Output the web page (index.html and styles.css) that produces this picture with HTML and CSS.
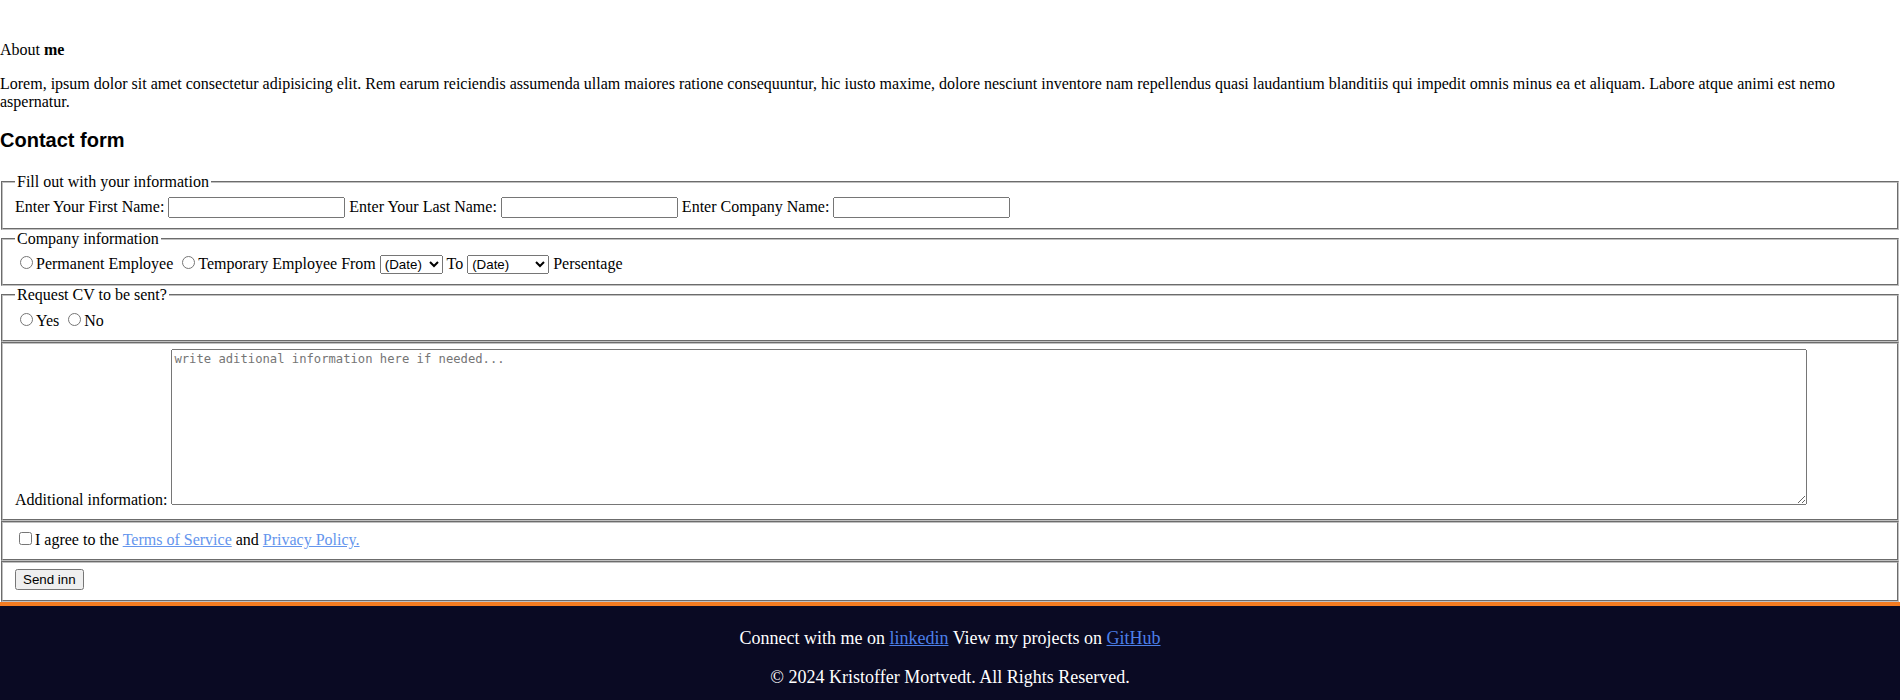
FILE: index.html
```html
<!DOCTYPE html>
<html lang="en">
<head>
<meta charset="utf-8">
<title>About me</title>
<link rel="stylesheet" href="styles.css">
</head>
<body>
<main class="page">
  <section class="about">
    <p class="about-title">About <b>me</b></p>
    <p class="about-text">Lorem, ipsum dolor sit amet consectetur adipisicing elit. Rem earum reiciendis assumenda ullam maiores ratione consequuntur, hic iusto maxime, dolore nesciunt inventore nam repellendus quasi laudantium blanditiis qui impedit omnis minus ea et aliquam. Labore atque animi est nemo aspernatur.</p>
  </section>
  <h3 class="form-title">Contact form</h3>
  <form class="contact">
    <fieldset class="group">
      <legend>Fill out with your information</legend>
      <label>Enter Your First Name: <input class="field" type="text"></label>
      <label>Enter Your Last Name: <input class="field" type="text"></label>
      <label>Enter Company Name: <input class="field" type="text"></label>
    </fieldset>
    <fieldset class="group">
      <legend>Company information</legend>
      <label><input type="radio" name="emp">Permanent Employee</label>
      <label><input type="radio" name="emp">Temporary Employee</label>
      <label>From <select class="date date-from"><option>(Date)</option></select></label>
      <label>To <select class="date date-to"><option>(Date)</option></select></label>
      <span>Persentage</span>
    </fieldset>
    <fieldset class="group">
      <legend>Request CV to be sent?</legend>
      <label><input type="radio" name="cv">Yes</label>
      <label><input type="radio" name="cv">No</label>
    </fieldset>
    <fieldset class="group">
      <label>Additional information: <textarea class="notes" rows="10" placeholder="write aditional information here if needed..."></textarea></label>
    </fieldset>
    <fieldset class="group">
      <label><input type="checkbox">I agree to the <a class="form-link" href="#">Terms of Service</a> and <a class="form-link" href="#">Privacy Policy.</a></label>
    </fieldset>
    <fieldset class="group">
      <button class="send" type="button">Send inn</button>
    </fieldset>
  </form>
</main>
<footer class="site-footer">
  <p>Connect with me on <a class="foot-link" href="#">linkedin</a> View my projects on <a class="foot-link" href="#">GitHub</a></p>
  <p>&copy; 2024 Kristoffer Mortvedt. All Rights Reserved.</p>
</footer>
</body>
</html>
```

FILE: styles.css
```css
html, body {
  margin: 0;
  padding: 0;
  background: #ffffff;
  color: #000000;
  font-family: "Liberation Serif", "Times New Roman", serif;
  font-size: 16px;
}

.about {
  padding-top: 25px;
}

.about p {
  margin: 16px 0;
}

.form-title {
  font-family: "Liberation Sans", Arial, sans-serif;
  font-size: 20px;
  font-weight: bold;
  margin: 18px 0 21px;
}

.contact {
  margin: 0;
}

.group {
  margin: 0 1px;
  border: 2px groove #c0c0c0;
  padding: 5.6px 12px 10px;
}

.group legend {
  padding: 0 2px;
}

.field {
  width: 177px;
  box-sizing: border-box;
  font-family: "Liberation Sans", Arial, sans-serif;
  font-size: 13.33px;
}

.date {
  font-family: "Liberation Sans", Arial, sans-serif;
  font-size: 13.33px;
  box-sizing: border-box;
}

.date-from {
  width: 63px;
}

.date-to {
  width: 82px;
}

.notes {
  width: 1636px;
  height: 156px;
  box-sizing: border-box;
  font-family: "DejaVu Sans Mono", "Liberation Mono", monospace;
  font-size: 12.2px;
  vertical-align: baseline;
}

.form-link {
  color: #6495ed;
}

.send {
  font-family: "Liberation Sans", Arial, sans-serif;
  font-size: 13.33px;
}

.site-footer {
  background: #0a0a23;
  border-top: 4px solid #f47c22;
  color: #ffffff;
  text-align: center;
  font-size: 18px;
  padding: 4px 0 20px;
}

.site-footer p {
  margin: 18px 0;
}

.foot-link {
  color: #4c7fe8;
}
```
